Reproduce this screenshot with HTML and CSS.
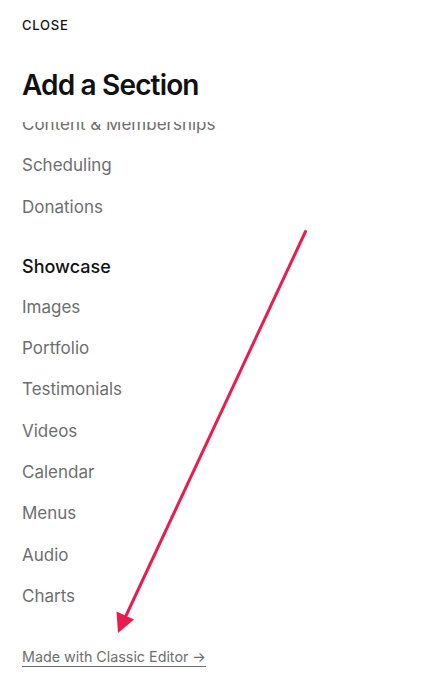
FILE: index.html
```html
<!DOCTYPE html>
<html lang="en">
<head>
<meta charset="utf-8">
<title>Add a Section</title>
<link rel="stylesheet" href="styles.css">
</head>
<body>
<div class="panel">
  <div class="close">CLOSE</div>
  <h1 class="title">Add a Section</h1>
  <div class="scroller">
    <div class="scroll-inner">
      <ul class="items">
        <li>Content &amp; Memberships</li>
        <li>Scheduling</li>
        <li>Donations</li>
      </ul>
      <div class="group-title">Showcase</div>
      <ul class="items">
        <li>Images</li>
        <li>Portfolio</li>
        <li>Testimonials</li>
        <li>Videos</li>
        <li>Calendar</li>
        <li>Menus</li>
        <li>Audio</li>
        <li>Charts</li>
      </ul>
    </div>
  </div>
  <a class="classic" href="#">Made with Classic Editor →</a>
</div>
<svg class="annotation" width="429" height="700" viewBox="0 0 429 700">
  <line x1="305.5" y1="231.5" x2="124" y2="620" stroke="#ec1b4d" stroke-width="3" stroke-linecap="round"/>
  <polygon points="118,633 116.5,611.5 134,619.5" fill="#ec1b4d"/>
</svg>
</body>
</html>
```
FILE: styles.css
```css
html, body {
  margin: 0;
  padding: 0;
  background: #fff;
}
body {
  font-family: Inter, "Liberation Sans", sans-serif;
  width: 429px;
  height: 700px;
  position: relative;
  overflow: hidden;
}
.panel {
  padding: 17px 22px 0 22px;
}
.close {
  font-size: 13px;
  line-height: 16px;
  font-weight: 500;
  letter-spacing: 0.06em;
  color: #111;
}
.title {
  margin: 35px 0 0 0;
  font-size: 28px;
  line-height: 34px;
  font-weight: 600;
  letter-spacing: -0.03em;
  color: #111;
}
.scroller {
  margin-top: 20px;
  height: 505px;
  overflow: hidden;
}
.scroll-inner {
  margin-top: -18px;
}
.items {
  list-style: none;
  margin: 0;
  padding: 0;
}
.items li {
  font-size: 17px;
  line-height: 41.3px;
  color: #6e6e6e;
}
.group-title {
  margin-top: 18px;
  font-size: 18px;
  line-height: 41px;
  font-weight: 500;
  color: #111;
}
.classic {
  display: inline-block;
  margin-top: 20px;
  font-size: 14.3px;
  line-height: 20px;
  color: #6e6e6e;
  text-decoration: underline;
  text-underline-offset: 4px;
  text-decoration-thickness: 1px;
}
.annotation {
  position: absolute;
  left: 0;
  top: 0;
  pointer-events: none;
}
```
